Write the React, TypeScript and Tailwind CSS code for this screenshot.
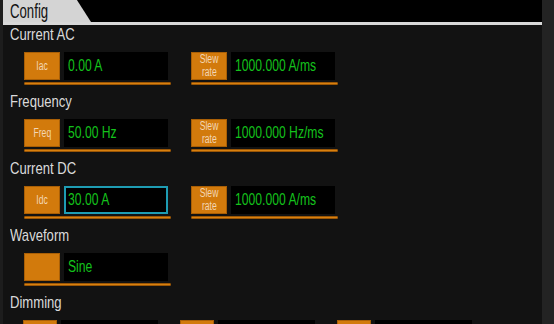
import React from 'react';

type Field = { label: string[]; value: string; focused?: boolean };

const sections: { title: string; fields: Field[] }[] = [
  { title: 'Current AC', fields: [{ label: ['Iac'], value: '0.00 A' }, { label: ['Slew', 'rate'], value: '1000.000 A/ms' }] },
  { title: 'Frequency', fields: [{ label: ['Freq'], value: '50.00 Hz' }, { label: ['Slew', 'rate'], value: '1000.000 Hz/ms' }] },
  { title: 'Current DC', fields: [{ label: ['Idc'], value: '30.00 A', focused: true }, { label: ['Slew', 'rate'], value: '1000.000 A/ms' }] },
  { title: 'Waveform', fields: [{ label: [], value: 'Sine' }] },
];

// the panel font is a narrow one; squeeze Liberation Sans to match
const narrow = 'inline-block whitespace-nowrap';

function Heading({ text }: { text: string }) {
  return (
    <div className="h-[27px] pl-[7px] pt-[1px] text-[17px] leading-[17px] text-[#dadada]">
      <span className={`${narrow} origin-left scale-x-[0.77]`}>{text}</span>
    </div>
  );
}

function FieldBox({ field }: { field: Field }) {
  return (
    <div className="w-[147px]">
      <div className="flex h-[28px] gap-[4px]">
        <div className="flex w-[36px] flex-col items-center justify-center border border-[#a95f06] bg-[#d27a0c] text-[12px] leading-[13px] text-[#f2d6b4]">
          {field.label.map((l) => (
            <span key={l} className={`${narrow} h-[13px] scale-x-[0.72]`}>
              {l}
            </span>
          ))}
        </div>
        <div
          className={`flex w-[104px] items-center overflow-hidden bg-black text-[16px] text-[#14c21c] ${
            field.focused ? 'border-2 border-[#1e9cb3] pl-[2px]' : 'pl-[4px]'
          }`}
        >
          <span className={`${narrow} origin-left scale-x-[0.76]`}>{field.value}</span>
        </div>
      </div>
      <div className="mt-[2px] h-[3px] rounded-[1px] border border-[#9a5606] bg-[#d8800f]" />
    </div>
  );
}

export default function App() {
  return (
    <div className="flex h-[324px] w-[554px] overflow-hidden bg-[#1d1d1d] font-['Liberation_Sans',sans-serif]">
      <div className="ml-[3px] flex w-[539px] flex-col bg-[#121212]">
        <div className="flex h-[22px] shrink-0 bg-black">
          <div className="flex w-[88px] items-center bg-[#d4d4d4] pl-[7px] text-[20px] text-[#111] [clip-path:polygon(0_0,84%_0,100%_100%,0_100%)]">
            <span className={`${narrow} origin-left scale-x-[0.66]`}>Config</span>
          </div>
        </div>
        <div className="h-[3px] shrink-0 bg-[#d8d8d8]" />

        <div className="flex flex-col">
          {sections.map((s) => (
            <section key={s.title} className="pb-[7px]">
              <Heading text={s.title} />
              <div className="flex gap-[20px] pl-[21px]">
                {s.fields.map((f, i) => (
                  <FieldBox key={i} field={f} />
                ))}
              </div>
            </section>
          ))}
          <section>
            <Heading text="Dimming" />
            <div className="flex gap-[22px] pl-[20px]">
              {[0, 1, 2].map((i) => (
                <div key={i} className="flex h-[28px] gap-[4px]">
                  <div className="w-[34px] border border-[#a95f06] bg-[#d27a0c]" />
                  <div className="w-[97px] bg-black" />
                </div>
              ))}
            </div>
          </section>
        </div>
      </div>
      <div className="w-[12px] bg-[#232323]" />
    </div>
  );
}
